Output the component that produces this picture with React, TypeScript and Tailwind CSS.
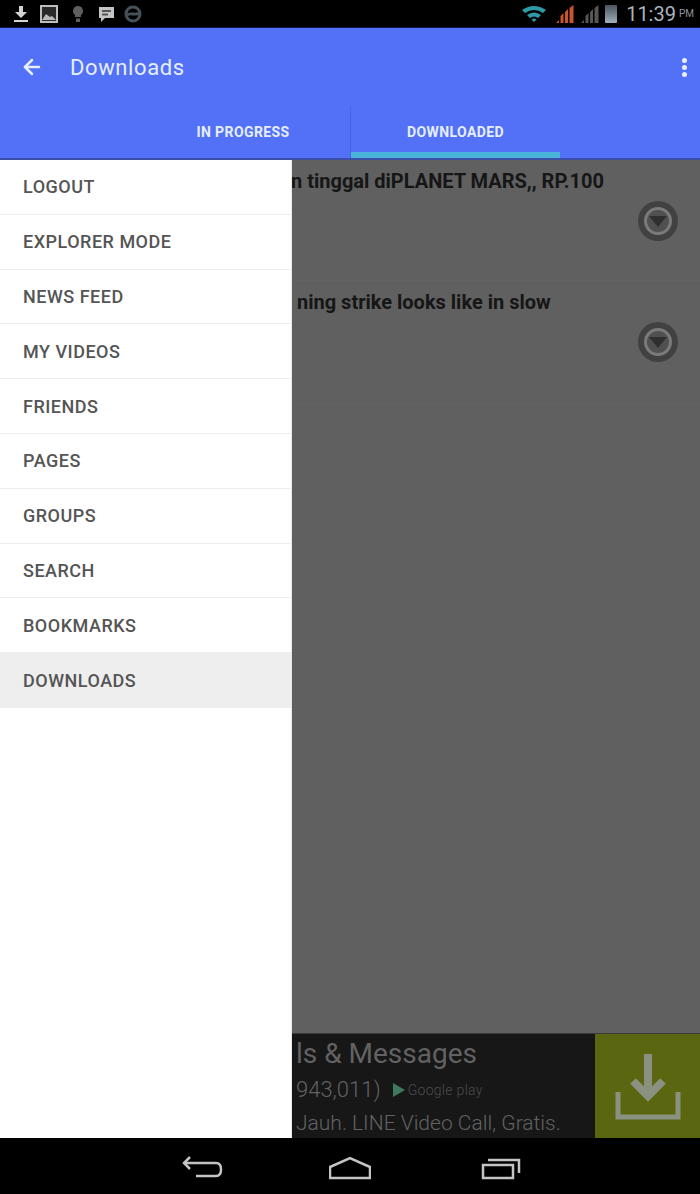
import { ArrowLeft } from 'lucide-react'

const drawerItems = [
	'LOGOUT',
	'EXPLORER MODE',
	'NEWS FEED',
	'MY VIDEOS',
	'FRIENDS',
	'PAGES',
	'GROUPS',
	'SEARCH',
	'BOOKMARKS',
	'DOWNLOADS'
]

const videos = [
	{ title: 'n tinggal diPLANET MARS,, RP.100', row: 'h-[121px] pl-[291px]' },
	{ title: 'ning strike looks like in slow', row: 'h-[124px] pl-[297px]' }
]

const SignalBars = ({ color }: { color: string }) => (
	<svg width="20" height="20" viewBox="0 0 20 20" fill={color}>
		<path d="M1 19l3-3v3zM5.5 19v-7l3-3v10zM10 19V8l3-3v14zM14.5 19V4l4-3v18z" />
	</svg>
)

const DownloadStateButton = () => (
	<div className="mt-[7px] ml-auto size-10">
		<svg width="40" height="40" viewBox="0 0 40 40">
			<circle cx="20" cy="20" r="20" fill="#414141" />
			<circle cx="20" cy="20" r="12.5" fill="#505050" stroke="#7a7a7a" strokeWidth="3" />
			<path d="M11 15h18l-9 11z" fill="#2f2f2f" />
		</svg>
	</div>
)

const StatusBar = () => (
	<div className="flex h-[28px] shrink-0 items-center justify-between border-b border-[#101a50] bg-black pr-[6px] pl-[13px]">
		<div className="flex items-center">
			<svg width="16" height="18" viewBox="0 0 16 18" fill="#d4d4d4">
				<path d="M6 1h4v6h4l-6 6-6-6h4zM1 15h14v2H1z" />
			</svg>
			<svg className="ml-[11px]" width="18" height="18" viewBox="0 0 18 18">
				<path d="M1 1h16v16H1z" fill="#2a2a2a" stroke="#bdbdbd" strokeWidth="2" />
				<path d="M2 15l4-6 4 3 2-1 4 4z" fill="#b8b8b8" />
			</svg>
			<svg className="ml-[14px]" width="12" height="18" viewBox="0 0 12 18" fill="#5e5e5e">
				<path d="M6 1a5 5 0 0 1 3 9v2H3v-2a5 5 0 0 1 3-9zM4 13.500h4V17H4z" />
			</svg>
			<svg className="ml-[14px]" width="17" height="18" viewBox="0 0 17 18">
				<path d="M1 2h15v11H7l-4 4v-4H1z" fill="#c4c4c4" />
				<path d="M4 5h9v2H4zM4 8.500h6v2H4z" fill="#555555" />
			</svg>
			<svg className="ml-[9px]" width="18" height="18" viewBox="0 0 18 18" fill="none" stroke="#46525a" strokeWidth="3">
				<circle cx="9" cy="9" r="7" />
				<path d="M3 10c3-3 9 1 12-2" />
			</svg>
		</div>
		<div className="flex items-center">
			<svg width="24" height="18" viewBox="0 0 24 18" fill="#2d9aa6">
				<path d="M0 5q12-8 24 0l-3 3q-9-6-18 0zM5 10q7-5 14 0l-3 3q-4-3-8 0zM9.500 14.500q2.500-2 5 0L12 17z" />
			</svg>
			<div className="ml-[9px]">
				<SignalBars color="#c9542f" />
			</div>
			<div className="ml-[5px]">
				<SignalBars color="#565656" />
			</div>
			<div className="ml-[5px] h-[18px] w-[12px] rounded-[1px] bg-gradient-to-b from-[#4a5560] to-[#9fb0bf]" />
			<span className="ml-[9px] text-[20px] leading-none text-[#a9b4bb]">11:39</span>
			<span className="ml-[3px] text-[10px] leading-none text-[#8d9499]">PM</span>
		</div>
	</div>
)

const AppHeader = () => (
	<div className="h-[132px] shrink-0 border-b-2 border-[#3c4fa8] bg-[#5271f6] text-[#e6eeff]">
		<div className="flex h-[78px] items-center pr-[13px] pl-[20px]">
			<ArrowLeft className="size-[24px]" strokeWidth={2.5} />
			<span className="ml-[26px] text-[22px] tracking-[0.6px]">Downloads</span>
			<div className="ml-auto flex flex-col gap-[2px]">
				<span className="size-[5px] rounded-full bg-[#e6eeff]" />
				<span className="size-[5px] rounded-full bg-[#e6eeff]" />
				<span className="size-[5px] rounded-full bg-[#e6eeff]" />
			</div>
		</div>
		<div className="flex h-[52px] pl-[140px] text-[14px] font-bold tracking-[0.4px]">
			<div className="flex w-[211px] items-center justify-center border-r border-[#4763e6] pt-[1px] pr-[4px]">
				IN PROGRESS
			</div>
			<div className="flex w-[209px] items-center justify-center border-b-[6px] border-[#49b3d8] pt-[6px]">
				DOWNLOADED
			</div>
		</div>
	</div>
)

const DrawerMenu = () => (
	<div className="absolute inset-y-0 left-0 w-[292px] border-r border-[#e8e8e8] bg-white">
		{drawerItems.map(item => (
			<div
				key={item}
				className={`flex h-[54.8px] items-center border-b border-[#ececec] pl-[23px] text-[18px] font-medium tracking-[0.5px] text-[#555555] ${
					item === 'DOWNLOADS' ? 'bg-[#eeeeee]' : ''
				}`}
			>
				{item}
			</div>
		))}
	</div>
)

const AdBanner = () => (
	<div className="flex h-[105px] shrink-0 border-t border-[#3a3a3a] bg-[#171717]">
		<div className="min-w-0 flex-1 pl-[296px] text-[#626262]">
			<div className="mt-[2px] text-[28px] leading-[36px] whitespace-nowrap">ls &amp; Messages</div>
			<div className="mt-[2px] flex items-center text-[22px] leading-[32px] font-light">
				<span>943,011)</span>
				<svg className="ml-[11px]" width="14" height="16" viewBox="0 0 14 16" fill="#3f7a5f">
					<path d="M1 1l12 7-12 7z" />
				</svg>
				<span className="ml-[2px] text-[14px] tracking-[0.3px] text-[#4c4c4c]">Google play</span>
			</div>
			<div className="mt-[1px] text-[21px] leading-[32px] font-light whitespace-nowrap">
				Jauh. LINE Video Call, Gratis.
			</div>
		</div>
		<div className="flex w-[105px] items-center justify-center bg-[#5b6610]">
			<svg width="66" height="68" viewBox="0 0 66 68" fill="none" stroke="#8b9180">
				<path d="M33 2v44" strokeWidth="8" />
				<path d="M18 29l15 15 15-15" strokeWidth="8" />
				<path d="M3 40v25h60V40" strokeWidth="5" />
			</svg>
		</div>
	</div>
)

const NavBar = () => (
	<div className="flex h-[56px] shrink-0 items-center bg-black pt-[4px] pl-[182px]">
		<svg width="41" height="24" viewBox="0 0 41 24" fill="none" stroke="#c4c4c4" strokeWidth="2.5">
			<path d="M2 7h32q5 0 5 6.500T34 20H14" />
			<path d="M8 1L2 7l6 6" />
		</svg>
		<svg className="ml-[106px]" width="42" height="24" viewBox="0 0 42 24" fill="none" stroke="#c4c4c4" strokeWidth="2.500">
			<path d="M1 11L21 2l20 9v11H1z" />
		</svg>
		<svg className="ml-[110px]" width="40" height="24" viewBox="0 0 40 24" fill="none" stroke="#c4c4c4" strokeWidth="2.500">
			<path d="M2 9h30v13H2z" />
			<path d="M7 4h31v13" />
		</svg>
	</div>
)

export default function App() {
	return (
		<div className="flex h-[1194px] w-[700px] flex-col overflow-hidden font-['Roboto',sans-serif]">
			<StatusBar />
			<AppHeader />
			<div className="relative flex min-h-0 flex-1 flex-col">
				<div className="min-h-0 flex-1 bg-[#606060]">
					{videos.map(video => (
						<div
							key={video.title}
							className={`border-b border-[#646464] pt-[8px] pr-[22px] ${video.row}`}
						>
							<div className="text-[20px] leading-[26px] font-bold text-[#161616]">{video.title}</div>
							<DownloadStateButton />
						</div>
					))}
				</div>
				<AdBanner />
				<DrawerMenu />
			</div>
			<NavBar />
		</div>
	)
}
